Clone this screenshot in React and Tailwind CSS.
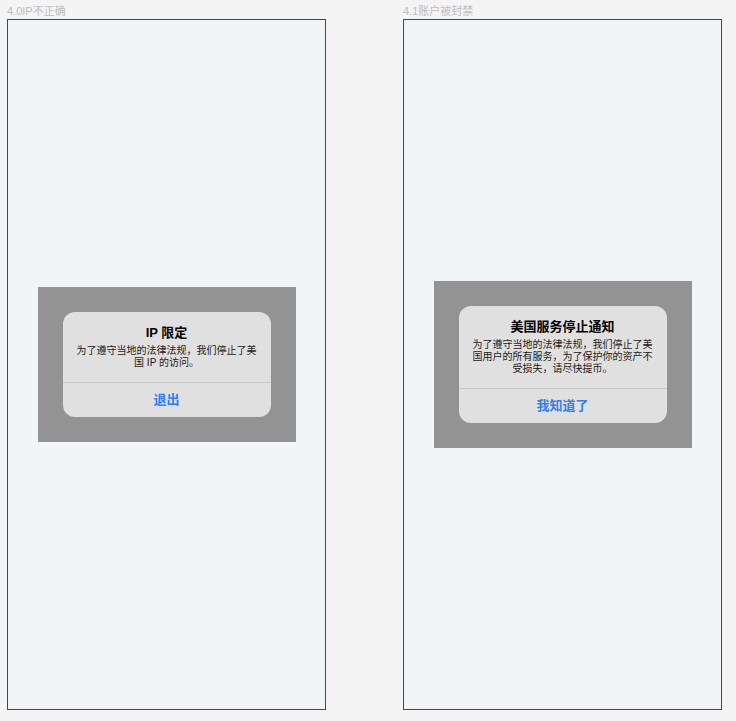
const font = { fontFamily: '"Liberation Sans", "Noto Sans CJK SC", sans-serif' };

const Dialog = ({ title, lines, action }) => (
    <div className="bg-[#939393] p-[25px]">
        <div className="w-[208px] rounded-[12px] bg-[#e0e0e0]">
            <div className="flex flex-col items-center pt-[11px] pb-[13px] text-center">
                <div className="text-[13px] font-bold leading-[20px] text-black">{title}</div>
                <div className="mt-[2px] text-[10px] leading-[12px] text-[#1a1a1a] whitespace-nowrap">
                    {lines.map((line) => (
                        <div key={line}>{line}</div>
                    ))}
                </div>
            </div>
            <div className="h-px bg-[#c8c8c8]" />
            <div className="flex h-[34px] items-center justify-center text-[13px] font-bold text-[#2f7ff0]">
                {action}
            </div>
        </div>
    </div>
);

const Screen = ({ label, children }) => (
    <div className="flex w-[319px] flex-col">
        <div className="h-[19px] pt-[4px] text-[11px] leading-[14px] text-[#bdbdbd]">{label}</div>
        <div className="flex h-[691px] items-center justify-center border border-[#484848] bg-[#f2f5f8]">
            {children}
        </div>
    </div>
);

const App = () => {
    return (
        <div className="flex min-h-screen gap-[77px] bg-[#f4f4f4] pl-[7px]" style={font}>
            <Screen label="4.0IP不正确">
                <Dialog
                    title="IP 限定"
                    lines={['为了遵守当地的法律法规，我们停止了美', '国 IP 的访问。']}
                    action="退出"
                />
            </Screen>
            <Screen label="4.1账户被封禁">
                <Dialog
                    title="美国服务停止通知"
                    lines={[
                        '为了遵守当地的法律法规，我们停止了美',
                        '国用户的所有服务，为了保护你的资产不',
                        '受损失，请尽快提币。',
                    ]}
                    action="我知道了"
                />
            </Screen>
        </div>
    );
};

export default App;
